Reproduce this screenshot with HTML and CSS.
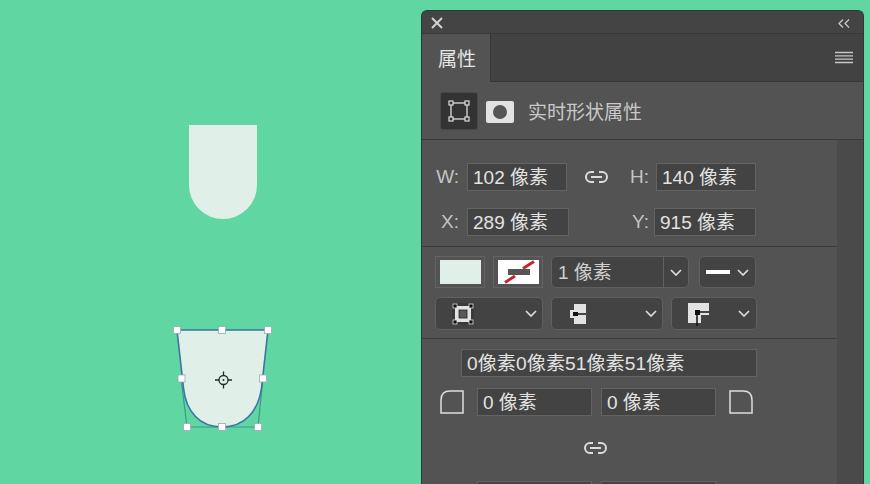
FILE: index.html
```html
<!DOCTYPE html>
<html lang="zh-CN">
<head>
    <meta charset="UTF-8">
    <title>属性</title>
    <link rel="stylesheet" href="styles.css">
</head>
<body>

<!-- Canvas with the two shapes -->
<svg class="canvas" width="420" height="484" viewBox="0 0 420 484">
    <path d="M189 125H257V185A34 34 0 0 1 189 185Z" fill="#e0f0e9"/>
    <path d="M181 378L187 427H258L263 378" fill="none" stroke="#3a9a84" stroke-width="1.2"/>
    <path d="M177 330H268L261.500 388C258 412 244 427 222 427C200 427 186 412 183.500 388Z" fill="#e0f0e9" stroke="#3a75a5" stroke-width="1.6"/>
    <g fill="#fff" stroke="#9aa9b5" stroke-width="0.8">
        <rect x="173.500" y="326.500" width="7" height="7"/>
        <rect x="218.500" y="326.500" width="7" height="7"/>
        <rect x="264.500" y="326.500" width="7" height="7"/>
        <rect x="178" y="375" width="7" height="7"/>
        <rect x="259.500" y="375" width="7" height="7"/>
        <rect x="183.500" y="423.500" width="7" height="7"/>
        <rect x="218.500" y="423.500" width="7" height="7"/>
        <rect x="254.500" y="423.500" width="7" height="7"/>
    </g>
    <g fill="none" stroke="#1d2b28" stroke-width="1.3">
        <circle cx="223.500" cy="380" r="4.500"/>
        <path d="M215 380H219M228 380H232M223.500 371.500V375.500M223.500 384.500V388.500"/>
    </g>
    <circle cx="223.500" cy="380" r="1" fill="#1d2b28"/>
</svg>

<div class="panel">
    <div class="titlebar">
        <svg width="12" height="12" viewBox="0 0 12 12"><path d="M1 1L11 11M11 1L1 11" stroke="#d2d2d2" stroke-width="2"/></svg>
        <svg width="12" height="9" viewBox="0 0 12 9"><path d="M5 0.500L1 4.500L5 8.500M11 0.500L7 4.500L11 8.500" fill="none" stroke="#cfcfcf" stroke-width="1.200"/></svg>
    </div>

    <div class="tabbar">
        <div class="tab-name">属性</div>
        <svg class="tab-menu" width="18" height="13" viewBox="0 0 18 13"><path d="M0 1.500H18M0 4.800H18M0 8.200H18M0 11.500H18" stroke="#c8c8c8" stroke-width="1.300"/></svg>
    </div>

    <div class="heading">
        <div class="shape-btn">
            <svg width="22" height="22" viewBox="0 0 22 22">
                <rect x="3" y="3" width="16" height="16" fill="none" stroke="#dedede" stroke-width="1.300"/>
                <g fill="#333" stroke="#dedede" stroke-width="1.200">
                    <rect x="1" y="1" width="4" height="4"/>
                    <rect x="17" y="1" width="4" height="4"/>
                    <rect x="1" y="17" width="4" height="4"/>
                    <rect x="17" y="17" width="4" height="4"/>
                </g>
            </svg>
        </div>
        <svg width="28" height="22" viewBox="0 0 28 22"><rect width="28" height="22" rx="2" fill="#e2e2e2"/><circle cx="14" cy="11" r="7" fill="#555"/></svg>
        <span class="heading-text">实时形状属性</span>
    </div>

    <div class="content">
        <div class="body">
            <section class="section size-section">
                <div class="row size-row">
                    <label class="field-label label-w">W:</label>
                    <div class="input input-w">102 像素</div>
                    <svg class="link link-size" width="25" height="14" viewBox="0 0 25 14"><use href="#link-icon"/></svg>
                    <label class="field-label label-h">H:</label>
                    <div class="input input-h">140 像素</div>
                </div>
                <div class="row pos-row">
                    <label class="field-label label-w">X:</label>
                    <div class="input input-x">289 像素</div>
                    <label class="field-label label-y">Y:</label>
                    <div class="input input-y">915 像素</div>
                </div>
            </section>

            <section class="section style-section">
                <div class="row style-row">
                    <div class="swatch"><div class="swatch-fill"></div></div>
                    <div class="swatch">
                        <svg width="41" height="24" viewBox="0 0 41 24">
                            <rect width="41" height="24" fill="#fff"/>
                            <path d="M7 22.500L17 16M25 8.500L36 1.500" stroke="#c8232c" stroke-width="3"/>
                            <rect x="10" y="9" width="22" height="6" fill="#555"/>
                        </svg>
                    </div>
                    <div class="select stroke-size">
                        <span class="stroke-value">1 像素</span>
                        <span class="stroke-arrow"><svg class="chevron" width="12" height="7" viewBox="0 0 12 7"><use href="#chevron-icon"/></svg></span>
                    </div>
                    <div class="select stroke-type">
                        <span class="stroke-line"></span>
                        <svg class="chevron" width="12" height="7" viewBox="0 0 12 7"><use href="#chevron-icon"/></svg>
                    </div>
                </div>
                <div class="row style-row-2">
                    <div class="select align-select">
                        <svg width="22" height="22" viewBox="0 0 22 22">
                            <rect width="22" height="22" fill="#3a3a3a"/>
                            <rect x="3" y="3" width="16" height="16" fill="#e2e2e2"/>
                            <rect x="7" y="7" width="8" height="8" fill="#5a5a5a" stroke="#222" stroke-width="0.800"/>
                            <g fill="#111" stroke="#e2e2e2" stroke-width="0.800">
                                <rect x="1" y="1" width="4" height="4"/>
                                <rect x="17" y="1" width="4" height="4"/>
                                <rect x="1" y="17" width="4" height="4"/>
                                <rect x="17" y="17" width="4" height="4"/>
                            </g>
                        </svg>
                        <svg class="chevron" width="12" height="7" viewBox="0 0 12 7"><use href="#chevron-icon"/></svg>
                    </div>
                    <div class="select cap-select">
                        <svg width="18" height="20" viewBox="0 0 18 20">
                            <path d="M4 0H16V20H4V14H0V6H4Z" fill="#e2e2e2"/>
                            <path d="M6 10H16" stroke="#111" stroke-width="1.500"/>
                            <rect x="3" y="8" width="5" height="4" fill="#111"/>
                        </svg>
                        <svg class="chevron" width="12" height="7" viewBox="0 0 12 7"><use href="#chevron-icon"/></svg>
                    </div>
                    <div class="select join-select">
                        <svg width="22" height="24" viewBox="0 0 22 24">
                            <path d="M0 1H21V13H13V21H0Z" fill="#e2e2e2"/>
                            <path d="M9 10H21M9 10V24" stroke="#111" stroke-width="1.500"/>
                            <rect x="7" y="8" width="5" height="5" fill="#111"/>
                        </svg>
                        <svg class="chevron" width="12" height="7" viewBox="0 0 12 7"><use href="#chevron-icon"/></svg>
                    </div>
                </div>
            </section>

            <section class="section corner-section">
                <div class="input input-all">0像素0像素51像素51像素</div>
                <div class="row corner-row">
                    <svg width="24" height="24" viewBox="0 0 24 24"><path d="M23 1H10Q1 1 1 10V23H23Z" fill="none" stroke="#dedede" stroke-width="1.500"/></svg>
                    <div class="input input-corner">0 像素</div>
                    <div class="input input-corner">0 像素</div>
                    <svg width="24" height="24" viewBox="0 0 24 24"><path d="M1 1H14Q23 1 23 10V23H1Z" fill="none" stroke="#dedede" stroke-width="1.500"/></svg>
                </div>
                <svg class="link link-corner" width="25" height="14" viewBox="0 0 25 14"><use href="#link-icon"/></svg>
                <div class="row corner-row corner-row-bottom">
                    <div class="input input-corner"></div>
                    <div class="input input-corner"></div>
                </div>
            </section>
        </div>
        <div class="scrollbar"></div>
    </div>
</div>

<!-- Shared icons -->
<svg class="defs" width="0" height="0">
    <defs>
        <g id="link-icon" fill="none" stroke="#dcdcdc" stroke-width="2">
            <path d="M10 2H7A5 5 0 0 0 7 12H10"/>
            <path d="M15 2H18A5 5 0 0 1 18 12H15"/>
            <path d="M7 7H18"/>
        </g>
        <path id="chevron-icon" d="M1 1L6 6L11 1" fill="none" stroke="#dcdcdc" stroke-width="1.700"/>
    </defs>
</svg>

</body>
</html>
```

FILE: styles.css
```css
body {
    margin: 0;
    width: 870px;
    height: 484px;
    overflow: hidden;
    position: relative;
    background-color: #60d6a3;
    font-family: "Liberation Sans", "Noto Sans CJK SC", sans-serif;
    color: #dcdcdc;
}

.canvas {
    position: absolute;
    left: 0;
    top: 0;
}

.defs {
    position: absolute;
}

/* Floating properties panel, cut off by the window */
.panel {
    position: absolute;
    left: 421px;
    top: 10px;
    width: 441px;
    height: 474px;
    border: 1px solid #2f3a36;
    border-bottom: none;
    border-radius: 6px 6px 0 0;
    background-color: #535353;
    overflow: hidden;
}

.titlebar {
    height: 22px;
    box-sizing: border-box;
    padding: 2px 13px 0 9px;
    display: flex;
    align-items: center;
    justify-content: space-between;
    background-color: #444;
}

.tabbar {
    height: 47px;
    display: flex;
    justify-content: space-between;
    background-color: #424242;
    border-top: 1px solid #383838;
    border-bottom: 1px solid #363636;
}

.tab-name {
    width: 69px;
    box-sizing: border-box;
    height: 48px;
    padding: 12px 0 0 16px;
    font-size: 19px;
    line-height: 27px;
    background-color: #535353;
    border-right: 1px solid #383838;
    color: #e6e6e6;
}

.tab-menu {
    margin: 17px 10px 0 0;
}

.heading {
    height: 58px;
    box-sizing: border-box;
    padding: 10px 0 0 18px;
    display: flex;
    align-items: flex-start;
    gap: 8px;
    border-bottom: 1px solid #383838;
}

.heading > svg {
    margin-top: 9px;
}

.shape-btn {
    width: 38px;
    height: 38px;
    box-sizing: border-box;
    display: flex;
    align-items: center;
    justify-content: center;
    background-color: #333;
    border: 1px solid #484848;
    border-radius: 3px;
}

.heading-text {
    margin: 7px 0 0 6px;
    font-size: 19px;
    line-height: 27px;
    color: #c8c8c8;
}

.content {
    display: flex;
}

.body {
    width: 415px;
}

.scrollbar {
    width: 26px;
    height: 360px;
    background-color: #4a4a4a;
}

.section {
    border-bottom: 1px solid #3c3c3c;
}

.row {
    display: flex;
    align-items: center;
}

.size-section {
    height: 107px;
    box-sizing: border-box;
    padding-top: 23px;
}

.size-row,
.pos-row {
    height: 28px;
}

.pos-row {
    margin-top: 17px;
}

.field-label {
    font-size: 19px;
    color: #c4c4c4;
    text-align: right;
}

.label-w {
    width: 37px;
}

.label-h {
    width: 20px;
    margin-right: 7px;
}

.label-y {
    width: 20px;
    margin: 0 5px 0 60px;
}

.input {
    box-sizing: border-box;
    height: 28px;
    padding-left: 5px;
    font-size: 19px;
    line-height: 27px;
    white-space: nowrap;
    background-color: #434343;
    border: 1.500px solid #636363;
    color: #e2e2e2;
}

.input-w,
.input-h {
    width: 100px;
}

.input-w {
    margin-left: 8px;
}

.input-x {
    width: 102px;
    margin-left: 8px;
}

.input-y {
    width: 102px;
}

.link {
    display: block;
}

.link-size {
    margin: 0 20px 0 17px;
}

.style-section {
    height: 92px;
    box-sizing: border-box;
    padding: 9px 0 0 13px;
}

.style-row {
    height: 32px;
    gap: 8px;
}

.style-row-2 {
    height: 33px;
    margin-top: 9px;
    gap: 8px;
}

.swatch {
    box-sizing: border-box;
    width: 50px;
    height: 32px;
    display: flex;
    align-items: center;
    justify-content: center;
    border: 1.500px solid #636363;
}

.swatch-fill {
    width: 41px;
    height: 24px;
    background-color: #e0f0e9;
}

.select {
    box-sizing: border-box;
    height: 100%;
    display: flex;
    align-items: center;
    justify-content: space-between;
    background-color: #434343;
    border: 1.500px solid #606060;
    border-radius: 5px;
}

.chevron {
    display: block;
}

.stroke-size {
    width: 138px;
    margin-right: 2px;
}

.stroke-value {
    padding: 0 0 3px 6px;
    font-size: 19px;
    color: #cfcfcf;
}

.stroke-arrow {
    width: 24px;
    height: 100%;
    display: flex;
    align-items: center;
    justify-content: center;
    border-left: 1.500px solid #606060;
}

.stroke-type {
    width: 57px;
    padding: 0 6px;
}

.stroke-line {
    width: 24px;
    height: 4px;
    background-color: #fff;
}

.align-select {
    width: 108px;
    padding: 0 5px 0 16px;
}

.cap-select {
    width: 112px;
    padding: 0 5px 0 18px;
}

.join-select {
    width: 86px;
    padding: 0 6px 0 16px;
}

.corner-section {
    border-bottom: none;
    padding-top: 10px;
}

.input-all {
    width: 296px;
    margin-left: 39px;
    font-size: 19.200px;
}

.corner-row {
    margin: 11px 0 0 18px;
    gap: 13px;
}

.input-corner {
    width: 115px;
    padding-left: 5px;
}

.input-corner + .input-corner {
    margin-left: -4px;
}

.link-corner {
    margin: 25px 0 0 161px;
}

.corner-row-bottom {
    margin: 26px 0 0 55px;
}
```
